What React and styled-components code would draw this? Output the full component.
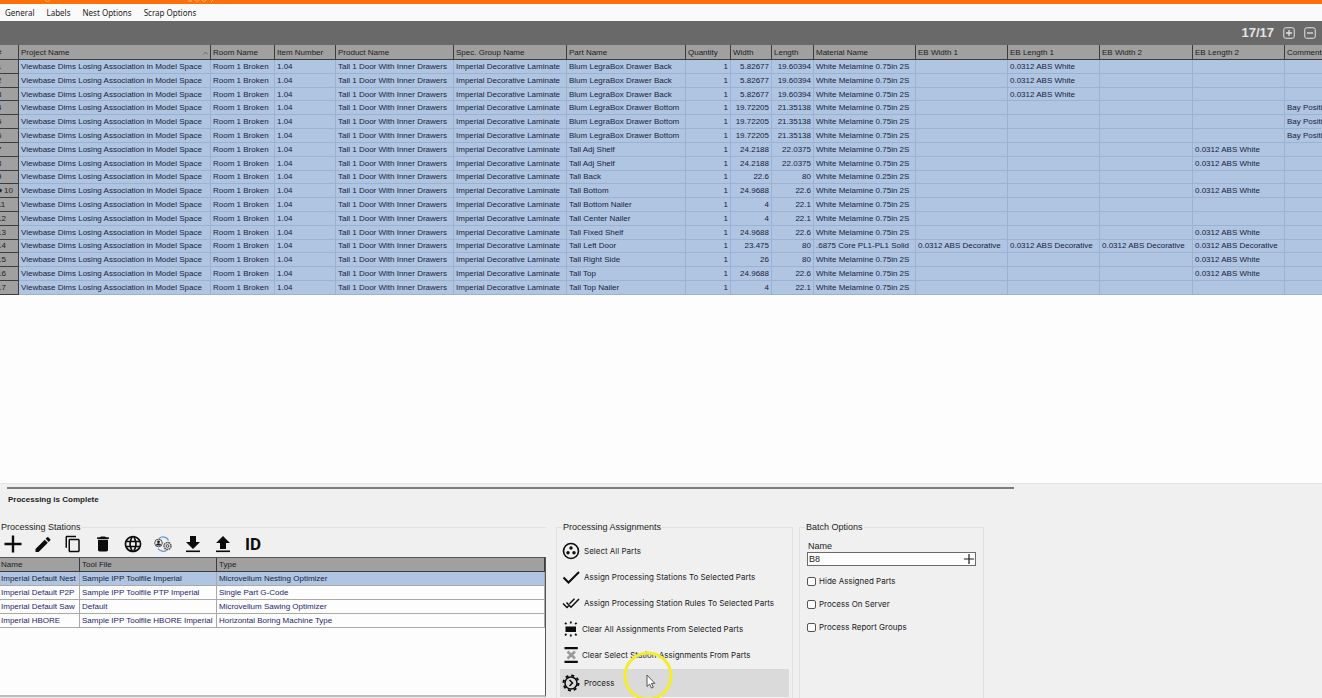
import { useState } from "react";
import styled, { createGlobalStyle } from "styled-components";
import {
  MdAdd,
  MdContentCopy,
  MdDelete,
  MdEdit,
  MdLanguage,
} from "react-icons/md";

const GlobalStyle = createGlobalStyle`
  * {
    box-sizing: border-box;
  }
  body {
    margin: 0;
    overflow: hidden;
    background-color: #f0f0f0;
    color: #1c1c1c;
    font-family: "Liberation Sans", Arial, sans-serif;
    font-size: 8px;
    line-height: 12px;
  }
  button, input {
    font: inherit;
    color: inherit;
  }
`;

const Page = styled.div`
  display: flex;
  flex-direction: column;
  min-height: 100vh;
  overflow: hidden;
`;

const TitleBar = styled.div`
  height: 4px;
  background-color: #ff6f0a;

  svg {
    display: block;
  }
`;

const MenuBar = styled.nav`
  display: flex;
  gap: 12px;
  height: 17px;
  padding: 0 5px;
  background-color: #fafafa;
`;

const MenuItem = styled.button`
  padding: 0;
  border: none;
  background-color: transparent;
  font-family: "Noto Sans", sans-serif;
`;

const CountBar = styled.div`
  display: flex;
  align-items: center;
  justify-content: flex-end;
  gap: 9px;
  height: 24px;
  padding-right: 6px;
  background-color: #696969;
  color: #e4e4e4;
`;

const Count = styled.span`
  font-size: 13px;
  font-weight: bold;
`;

const BoxButton = styled.button`
  display: flex;
  padding: 0;
  border: none;
  background-color: transparent;
`;

const PartsArea = styled.div`
  flex: 1;
  overflow: hidden;
  background-color: #fdfdfd;
`;

const PartsTable = styled.table`
  width: 1376px;
  height: 250px;
  table-layout: fixed;
  border-collapse: separate;
  border-spacing: 0;

  thead th {
    height: 15px;
    padding-top: 1px;
  }
`;

const Cell = styled.td`
  padding: 0 2px;
  overflow: hidden;
  white-space: nowrap;
  text-align: ${(p) => (p.$right ? "right" : "left")};
  background-color: #afc5e2;
  border-right: 1px solid #9db2d0;
  border-bottom: 1px solid #9db2d0;
  color: #17233c;
  line-height: 11px;
`;

const HeadCell = styled.th`
  padding: 0 2px;
  overflow: hidden;
  white-space: nowrap;
  text-align: left;
  font-weight: normal;
  background-color: #a0a0a0;
  border-right: 1px solid #3c3c3c;
  border-bottom: 1px solid #3c3c3c;
  line-height: 12px;
`;

const HeadLabel = styled.span`
  display: flex;
  justify-content: space-between;
`;

const RowHead = styled(HeadCell)`
  padding: 0;
  text-indent: -3px;
  line-height: 11px;
`;

const Bottom = styled.section`
  border-top: 1px solid #e4e4e4;
  padding-top: 3px;
`;

const Progress = styled.div`
  width: 1007px;
  height: 2px;
  margin-left: 7px;
  background-color: #7c7c7c;
`;

const Status = styled.p`
  margin: 5px 8px 15px;
  font-weight: bold;
`;

const Groups = styled.div`
  display: flex;
  align-items: stretch;
  gap: 6px;
  height: 177px;
`;

const Group = styled.fieldset`
  position: relative;
  min-width: 0;
  width: ${(p) => p.$width}px;
  margin: 0 ${(p) => (p.$flush ? 4 : 0)}px 0 0;
  padding: ${(p) => p.$pad || "0"};
  border: 1px solid #e0e0e0;
  border-left-width: ${(p) => (p.$flush ? 0 : 1)}px;
  border-right-width: ${(p) => (p.$flush ? 0 : 1)}px;
  border-bottom: none;
`;

const Legend = styled.legend`
  margin-left: ${(p) => p.$indent || 0}px;
  padding: 0 1px;
  font-size: 9px;
`;

const Tools = styled.div`
  display: flex;
  align-items: center;
  gap: 10px;
  height: 24px;
  padding: 0 0 2px 3px;
`;

const Tool = styled.button`
  display: flex;
  align-items: center;
  justify-content: center;
  width: 20px;
  height: 20px;
  padding: 0;
  border: none;
  background-color: transparent;
  color: #0c0c0c;
  font-family: Roboto, sans-serif;
  font-size: 17px;
  font-weight: bold;
`;

const StationArea = styled.div`
  height: 140px;
  background-color: #fdfdfd;
  border-top: 1px solid #555;
  border-right: 1px solid #555;
  border-bottom: 2px solid #bcbcbc;
`;

const StationTable = styled.table`
  width: 100%;
  table-layout: fixed;
  border-collapse: separate;
  border-spacing: 0;
`;

const StationCell = styled.td`
  height: 14px;
  padding: 0 2px;
  border-right: 1px solid #a9a9a9;
  border-bottom: 1px solid #a9a9a9;
  background-color: ${(p) => (p.$selected ? "#afc5e2" : "#fdfdfd")};
  color: ${(p) => (p.$selected ? "#17233c" : "#25256e")};
  white-space: nowrap;

  &:first-child {
    padding-left: 1px;
  }
`;

const StationHead = styled(HeadCell)`
  height: 14px;

  &:first-child {
    padding-left: 1px;
  }
`;

const Action = styled.button`
  display: flex;
  align-items: center;
  gap: 4px;
  width: 100%;
  height: ${(p) => (p.$active ? 28 : 26)}px;
  margin-top: ${(p) => (p.$active ? 1 : 0)}px;
  padding: 0 2px;
  border: none;
  background-color: ${(p) => (p.$active ? "#dadada" : "transparent")};
  font-family: Inter, sans-serif;
  text-align: left;

  svg {
    color: #0c0c0c;
  }
`;

const NameLabel = styled.label`
  display: block;
  padding-left: 1px;
  font-size: 9px;
`;

const NameBox = styled.div`
  display: flex;
  align-items: center;
  width: 169px;
  height: 14px;
  margin-bottom: 9px;
  border: 1px solid #6a6a6a;
  background-color: #fdfdfd;
`;

const NameInput = styled.input`
  flex: 1;
  min-width: 0;
  height: 12px;
  padding: 0 1px;
  border: none;
  outline: none;
  background-color: transparent;
  font-size: 9px;
`;

const Option = styled.label`
  display: flex;
  align-items: center;
  gap: 3px;
  height: 12px;
  margin-bottom: 11px;
  font-family: Inter, sans-serif;
`;

const Check = styled.input`
  appearance: none;
  width: 9px;
  height: 9px;
  margin: 0;
  border: 1px solid #555;
  border-radius: 2px;
  background-color: #fdfdfd;

  &:checked {
    background-color: #555;
  }
`;

const Pointer = styled.div`
  position: absolute;
  z-index: 2;
  left: 66px;
  bottom: -3px;
  height: 50px;
  pointer-events: none;
`;

const columns = [
  { name: "#", width: 19 },
  { name: "Project Name", width: 192, sorted: true },
  { name: "Room Name", width: 64 },
  { name: "Item Number", width: 61 },
  { name: "Product Name", width: 118 },
  { name: "Spec. Group Name", width: 113 },
  { name: "Part Name", width: 119 },
  { name: "Quantity", width: 45, right: true },
  { name: "Width", width: 41, right: true },
  { name: "Length", width: 42, right: true },
  { name: "Material Name", width: 102 },
  { name: "EB Width 1", width: 92 },
  { name: "EB Length 1", width: 92 },
  { name: "EB Width 2", width: 93 },
  { name: "EB Length 2", width: 92 },
  { name: "Comments", width: 91 },
];

const WHITE = "0.0312 ABS White";
const DECO = "0.0312 ABS Decorative";
const MELAMINE = "White Melamine 0.75in 2S";

// part, width, length, material, EB W1, EB L1, EB W2, EB L2, comments
const back = ["Blum LegraBox Drawer Back", "5.82677", "19.60394", MELAMINE, "", WHITE, "", "", ""];
const bottom = ["Blum LegraBox Drawer Bottom", "19.72205", "21.35138", MELAMINE, "", "", "", "", "Bay Position"];
const shelf = ["Tall Adj Shelf", "24.2188", "22.0375", MELAMINE, "", "", "", WHITE, ""];

const parts = [
  back,
  back,
  back,
  bottom,
  bottom,
  bottom,
  shelf,
  shelf,
  ["Tall Back", "22.6", "80", "White Melamine 0.25in 2S", "", "", "", "", ""],
  ["Tall Bottom", "24.9688", "22.6", MELAMINE, "", "", "", WHITE, ""],
  ["Tall Bottom Nailer", "4", "22.1", MELAMINE, "", "", "", "", ""],
  ["Tall Center Nailer", "4", "22.1", MELAMINE, "", "", "", "", ""],
  ["Tall Fixed Shelf", "24.9688", "22.6", MELAMINE, "", "", "", WHITE, ""],
  ["Tall Left Door", "23.475", "80", ".6875 Core PL1-PL1 Solid", DECO, DECO, DECO, DECO, ""],
  ["Tall Right Side", "26", "80", MELAMINE, "", "", "", WHITE, ""],
  ["Tall Top", "24.9688", "22.6", MELAMINE, "", "", "", WHITE, ""],
  ["Tall Top Nailer", "4", "22.1", MELAMINE, "", "", "", "", ""],
];

const stations = [
  ["Imperial Default Nest", "Sample IPP Toolfile Imperial", "Microvellum Nesting Optimizer"],
  ["Imperial Default P2P", "Sample IPP Toolfile PTP Imperial", "Single Part G-Code"],
  ["Imperial Default Saw", "Default", "Microvellum Sawing Optimizer"],
  ["Imperial HBORE", "Sample IPP Toolfile HBORE Imperial", "Horizontal Boring Machine Type"],
];

const PlusMinus = ({ plus }) => (
  <svg width="12" height="12" viewBox="0 0 12 12" fill="none" stroke="#e4e4e4">
    <rect x="0.75" y="0.75" width="10.5" height="10.5" rx="2" />
    <path d={plus ? "M3 6h6M6 3v6" : "M3 6h6"} strokeWidth="1.3" />
  </svg>
);

const PlusIcon = ({ size, weight }) => (
  <svg width={size} height={size} viewBox="0 0 20 20" stroke="currentColor">
    <path d="M1.5 10h17M10 1.5v17" strokeWidth={weight} />
  </svg>
);

const ArrowIcon = ({ up }) => (
  <svg width="20" height="20" viewBox="0 0 20 20" fill="currentColor">
    <path
      d={
        up
          ? "M10 2l7 7h-4v6H7V9H3z"
          : "M7 2h6v6h4l-7 7-7-7h4z"
      }
    />
    <path d="M3 16.5h14v1.6H3z" />
  </svg>
);

const SyncIcon = () => (
  <svg width="20" height="20" viewBox="0 0 20 20" fill="none">
    <path d="M6 4.5C9 2 14 2.5 15.5 6.5" stroke="#5b9bd5" strokeWidth="1.3" />
    <path d="M5 14.5c2 3 6 3.5 8.500 2" stroke="#5b9bd5" strokeWidth="1.3" />
    <circle cx="5.5" cy="9" r="3.8" fill="#f0f0f0" stroke="#555" />
    <circle cx="5.5" cy="7.8" r="1.4" fill="#222" />
    <path d="M3 11.5c0-3 5-3 5 0z" fill="#222" />
    <circle cx="14.5" cy="12" r="3.5" stroke="#555" strokeWidth="1.5" strokeDasharray="1.8 0.6" />
    <circle cx="14.5" cy="12" r="1.4" stroke="#444" />
  </svg>
);

const SelectIcon = () => (
  <svg width="18" height="18" viewBox="0 0 18 18">
    <circle cx="9" cy="9" r="7.5" fill="none" stroke="currentColor" strokeWidth="1.6" />
    <circle cx="9" cy="6" r="1.7" fill="currentColor" />
    <circle cx="6" cy="10.8" r="1.7" fill="currentColor" />
    <circle cx="12" cy="10.8" r="1.7" fill="currentColor" />
  </svg>
);

const CheckIcon = () => (
  <svg width="18" height="18" viewBox="0 0 18 18" fill="none" stroke="currentColor">
    <path d="M1.5 9.5l5 5L17 4" strokeWidth="2" />
  </svg>
);

const RulesIcon = () => (
  <svg width="18" height="18" viewBox="0 0 18 18" fill="none" stroke="currentColor">
    <path d="M1 9.5l4 4 1.5-1.5M4.5 8.5l4.500 4.700 8-8.200" strokeWidth="1.5" />
    <path d="M7.500 9.800l5-5" strokeWidth="1.5" />
  </svg>
);

const ClearAllIcon = () => (
  <svg width="16" height="18" viewBox="-1 0 16 18" fill="none" stroke="currentColor">
    <rect x="2.5" y="6.5" width="10.5" height="5.5" fill="currentColor" stroke="none" />
    <path
      d="M7.800 1.500v2M7.800 14.500v2M2 2.800l1.500 1.400M13.600 2.800l-1.500 1.400M2 15.400l1.500-1.400M13.600 15.400l-1.500-1.400"
      strokeWidth="1.8"
    />
  </svg>
);

const ClearSelectIcon = () => (
  <svg width="16" height="18" viewBox="-1 0 16 18">
    <path d="M1.500 1h13.300v2.200H1.500zM1.500 14.800h13.300V17H1.500z" fill="currentColor" />
    <path d="M4.500 5.500l7.500 7M12 5.500l-7.500 7" stroke="#9a9a9a" strokeWidth="2.6" />
  </svg>
);

const ProcessIcon = () => (
  <svg width="18" height="18" viewBox="0 0 18 18" fill="none" stroke="currentColor">
    <circle cx="9" cy="9" r="7.5" strokeWidth="2" strokeDasharray="3 2.89" />
    <circle cx="9" cy="9" r="6" strokeWidth="1.5" />
    <path d="M7.500 6l3 3-3 3" strokeWidth="1.5" />
  </svg>
);

const actions = [
  { label: "Select All Parts", icon: <SelectIcon /> },
  { label: "Assign Processing Stations To Selected Parts", icon: <CheckIcon /> },
  { label: "Assign Processing Station Rules To Selected Parts", icon: <RulesIcon /> },
  { label: "Clear All Assignments From Selected Parts", icon: <ClearAllIcon /> },
  { label: "Clear Select Station Assignments From Parts", icon: <ClearSelectIcon /> },
  { label: "Process", icon: <ProcessIcon />, active: true },
];

const tools = [
  { label: "Add", icon: <PlusIcon size={20} weight={2.4} /> },
  { label: "Edit", icon: <MdEdit size={21} /> },
  { label: "Copy", icon: <MdContentCopy size={18} /> },
  { label: "Delete", icon: <MdDelete size={22} /> },
  { label: "Web", icon: <MdLanguage size={20} /> },
  { label: "Sync", icon: <SyncIcon /> },
  { label: "Import", icon: <ArrowIcon /> },
  { label: "Export", icon: <ArrowIcon up /> },
];

const rowLabel = (n) => (n === 10 ? "➧10" : n);

const Parts = () => (
  <PartsArea>
    <PartsTable>
      <colgroup>
        {columns.map((c) => (
          <col key={c.name} width={c.width} />
        ))}
      </colgroup>
      <thead>
        <tr>
          <RowHead>#</RowHead>
          {columns.slice(1).map((c) => (
            <HeadCell key={c.name}>
              <HeadLabel>
                {c.name}
                {c.sorted && (
                  <svg width="5" height="12" viewBox="0 0 5 12" fill="none" stroke="#666">
                    <path d="M0.5 7l2-1.500 2 1.500" />
                  </svg>
                )}
              </HeadLabel>
            </HeadCell>
          ))}
        </tr>
      </thead>
      <tbody>
        {parts.map(([part, ...rest], i) => {
          const cells = [
            "Viewbase Dims Losing Association in Model Space",
            "Room 1 Broken",
            "1.04",
            "Tall 1 Door With Inner Drawers",
            "Imperial Decorative Laminate",
            part,
            "1",
            ...rest,
          ];
          return (
            <tr key={i}>
              <RowHead>{rowLabel(i + 1)}</RowHead>
              {cells.map((text, j) => (
                <Cell key={j} $right={columns[j + 1].right}>
                  {text}
                </Cell>
              ))}
            </tr>
          );
        })}
      </tbody>
    </PartsTable>
  </PartsArea>
);

const Stations = () => (
  <Group $width={546} $flush>
    <Legend>Processing Stations</Legend>
    <Tools>
      {tools.map((t) => (
        <Tool key={t.label} aria-label={t.label}>
          {t.icon}
        </Tool>
      ))}
      <Tool>ID</Tool>
    </Tools>
    <StationArea>
      <StationTable>
        <colgroup>
          <col width="80" />
          <col width="137" />
          <col />
        </colgroup>
        <thead>
          <tr>
            <StationHead>Name</StationHead>
            <StationHead>Tool File</StationHead>
            <StationHead>Type</StationHead>
          </tr>
        </thead>
        <tbody>
          {stations.map((row, i) => (
            <tr key={row[0]}>
              {row.map((text) => (
                <StationCell key={text} $selected={i === 0}>
                  {text}
                </StationCell>
              ))}
            </tr>
          ))}
        </tbody>
      </StationTable>
    </StationArea>
  </Group>
);

const BatchOptions = () => {
  const [name, setName] = useState("B8");

  return (
    <Group $width={185} $pad="7px 7px 0">
      <Legend $indent={-2}>Batch Options</Legend>
      <NameLabel htmlFor="batch-name">Name</NameLabel>
      <NameBox>
        <NameInput
          id="batch-name"
          value={name}
          onChange={(e) => setName(e.target.value)}
        />
        <BoxButton aria-label="New batch">
          <PlusIcon size={12} weight={2} />
        </BoxButton>
      </NameBox>
      {["Hide Assigned Parts", "Process On Server", "Process Report Groups"].map(
        (label) => (
          <Option key={label}>
            <Check type="checkbox" />
            {label}
          </Option>
        )
      )}
    </Group>
  );
};

const App = () => {
  return (
    <Page>
      <GlobalStyle />
      <TitleBar>
        <svg width="220" height="4" viewBox="0 0 220 4" fill="none" stroke="#ffc06a">
          <path d="M45 0c1 2 5 2 5-1M188 1h4M195 0c1 2 4 2 4-1M202 0c1 2 4 2 4-1M213 0l-2 2" />
        </svg>
      </TitleBar>
      <MenuBar>
        {["General", "Labels", "Nest Options", "Scrap Options"].map((item) => (
          <MenuItem key={item}>{item}</MenuItem>
        ))}
      </MenuBar>
      <CountBar>
        <Count>17/17</Count>
        <BoxButton aria-label="Expand">
          <PlusMinus plus />
        </BoxButton>
        <BoxButton aria-label="Collapse">
          <PlusMinus />
        </BoxButton>
      </CountBar>
      <Parts />
      <Bottom>
        <Progress />
        <Status>Processing is Complete</Status>
        <Groups>
          <Stations />
          <Group $width={237} $pad="5px 3px 0">
            <Legend $indent={2}>Processing Assignments</Legend>
            {actions.map((a) => (
              <Action key={a.label} $active={a.active}>
                {a.icon}
                {a.label}
              </Action>
            ))}
            <Pointer>
              <svg width="50" height="50" viewBox="0 0 50 50">
                <circle cx="25" cy="25" r="23" fill="none" stroke="#f4ec2c" strokeWidth="3" />
                <path
                  d="M24 24v11.500l2.600-2.400 1.900 4 1.800-0.900-1.900-3.800h3.400z"
                  fill="#fff"
                  stroke="#444"
                  strokeWidth="0.9"
                />
              </svg>
            </Pointer>
          </Group>
          <BatchOptions />
        </Groups>
      </Bottom>
    </Page>
  );
};

export default App;
